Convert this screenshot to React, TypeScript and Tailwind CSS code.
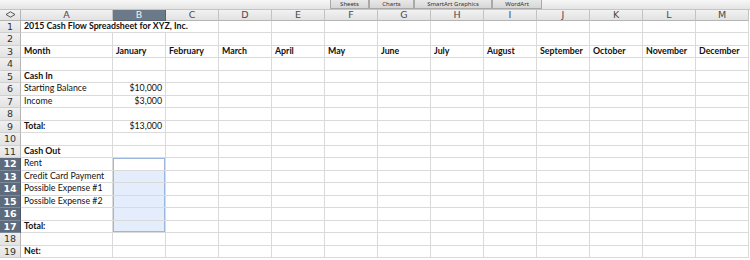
import React from "react";

const COLS = ["A", "B", "C", "D", "E", "F", "G", "H", "I", "J", "K", "L", "M"];
const MONTHS = [
  "January",
  "February",
  "March",
  "April",
  "May",
  "June",
  "July",
  "August",
  "September",
  "October",
  "November",
  "December",
];

type RowDef = { a?: string; bold?: boolean; b?: string };

const ROWS: Record<number, RowDef> = {
  5: { a: "Cash In", bold: true },
  6: { a: "Starting Balance", b: "$10,000" },
  7: { a: "Income", b: "$3,000" },
  9: { a: "Total:", bold: true, b: "$13,000" },
  11: { a: "Cash Out", bold: true },
  12: { a: "Rent" },
  13: { a: "Credit Card Payment" },
  14: { a: "Possible Expense #1" },
  15: { a: "Possible Expense #2" },
  17: { a: "Total:", bold: true },
  19: { a: "Net:", bold: true },
};

const cellFont = { fontFamily: "Lato, 'Open Sans', sans-serif" } as const;

function Tab({ label, w }: { label: string; w: string }) {
  return (
    <div
      className={`${w} h-[9px] flex items-center justify-center border-l border-r border-b border-[#a9a9a9] bg-gradient-to-b from-[#e9e9e9] to-[#d6d6d6] text-[6px] leading-none text-[#333]`}
    >
      {label}
    </div>
  );
}

function RowHeader({ n }: { n: number }) {
  const hi = n >= 12 && n <= 17;
  return (
    <div
      className={`w-[21px] shrink-0 h-full flex items-center justify-center border-r border-b text-[9.5px] leading-none ${
        hi
          ? "bg-[#5d6b7c] text-white border-r-[#4b5766] border-b-[#7d8a99] font-bold"
          : "bg-gradient-to-b from-[#f0f0f0] to-[#e3e3e3] text-[#333] border-r-[#b5b5b5] border-b-[#cfcfcf]"
      }`}
      style={{ fontFamily: "'DejaVu Sans', sans-serif" }}
    >
      {n}
    </div>
  );
}

function selClass(n: number) {
  if (n === 12)
    return "bg-white shadow-[inset_1px_0_0_#9cb6dd,inset_-1px_0_0_#9cb6dd,inset_0_1px_0_#9cb6dd]";
  if (n === 17)
    return "bg-[#e4edfb] shadow-[inset_1px_0_0_#9cb6dd,inset_-1px_0_0_#9cb6dd,inset_0_-1px_0_#9cb6dd]";
  return "bg-[#e4edfb] shadow-[inset_1px_0_0_#9cb6dd,inset_-1px_0_0_#9cb6dd]";
}

function Row({ n }: { n: number }) {
  const def = ROWS[n] || {};
  const base =
    "h-full shrink-0 border-r border-b border-[#dadada] flex items-center whitespace-nowrap text-[8.8px] leading-none text-[#111]";
  if (n === 1) {
    return (
      <div className="flex h-[12.5px]">
        <RowHeader n={n} />
        <div className={`${base} w-[198px] pl-[3px] font-bold`} style={cellFont}>
          2015 Cash Flow Spreadsheet for XYZ, Inc.
        </div>
        {COLS.slice(3).map((c) => (
          <div key={c} className={`${base} w-[53px]`} />
        ))}
      </div>
    );
  }
  if (n === 3) {
    return (
      <div className="flex h-[12.5px]">
        <RowHeader n={n} />
        <div className={`${base} w-[92px] pl-[3px] font-bold`} style={cellFont}>
          Month
        </div>
        {MONTHS.map((m) => (
          <div key={m} className={`${base} w-[53px] pl-[3px] font-bold`} style={cellFont}>
            {m}
          </div>
        ))}
      </div>
    );
  }
  const sel = n >= 12 && n <= 17;
  return (
    <div className="flex h-[12.5px]">
      <RowHeader n={n} />
      <div
        className={`${base} w-[92px] pl-[3px] ${def.bold ? "font-bold" : ""}`}
        style={cellFont}
      >
        {def.a}
      </div>
      <div
        className={`${base} w-[53px] justify-end pr-[3px] ${sel ? selClass(n) : ""}`}
        style={cellFont}
      >
        {def.b}
      </div>
      {COLS.slice(2).map((c) => (
        <div key={c} className={`${base} w-[53px]`} />
      ))}
    </div>
  );
}

export default function App() {
  const rows = Array.from({ length: 19 }, (_, i) => i + 1);
  return (
    <div className="w-[750px] h-[260px] overflow-hidden bg-white">
      {/* ribbon tab strip */}
      <div className="h-[10px] flex bg-gradient-to-b from-[#f7f7f7] to-[#e4e4e4] border-b border-[#c4c4c4]">
        <div className="w-[330px] shrink-0" />
        <Tab label="Sheets" w="w-[39px]" />
        <Tab label="Charts" w="w-[45px]" />
        <Tab label="SmartArt Graphics" w="w-[78px]" />
        <Tab label="WordArt" w="w-[50px]" />
      </div>
      {/* column headers */}
      <div className="flex h-[10.5px]">
        <div className="w-[21px] shrink-0 h-full flex items-center justify-center border-r border-b border-[#b5b5b5] bg-gradient-to-b from-[#f2f2f2] to-[#e2e2e2]">
          <svg width="11" height="7" viewBox="0 0 11 7">
            <path
              d="M1 3.5 L5.5 0.8 L10 3.5 L5.5 6.2 Z"
              fill="none"
              stroke="#555"
              strokeWidth="1"
            />
          </svg>
        </div>
        {COLS.map((c, i) => (
          <div
            key={c}
            className={`${i === 0 ? "w-[92px]" : "w-[53px]"} shrink-0 h-full flex items-center justify-center border-r border-b text-[9.5px] leading-none ${
              c === "B"
                ? "bg-[#6c7989] text-[#eef1f5] border-r-[#56616f] border-b-[#56616f]"
                : "bg-gradient-to-b from-[#f2f2f2] to-[#e2e2e2] text-[#4a4a4a] border-r-[#c2c2c2] border-b-[#b5b5b5]"
            }`}
            style={{ fontFamily: "'DejaVu Sans', sans-serif" }}
          >
            {c}
          </div>
        ))}
      </div>
      {rows.map((n) => (
        <Row key={n} n={n} />
      ))}
    </div>
  );
}
